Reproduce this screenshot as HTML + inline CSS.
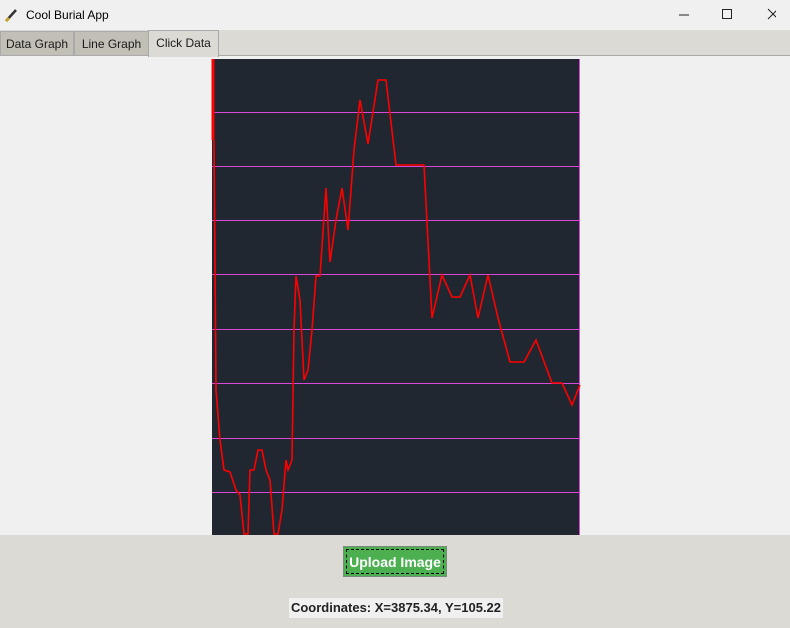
<!DOCTYPE html>
<html><head><style>
body{margin:0;width:790px;height:628px;overflow:hidden;font-family:"Liberation Sans",sans-serif;background:#f0f0f0;position:relative}
.title{position:absolute;left:0;top:0;width:790px;height:30px;background:#f0f0f0;font-size:12px}
.tabs{position:absolute;top:30px;left:0;width:790px;height:25px;background:#dcdad5;border-bottom:1px solid #a9a9a9}
.tab{position:absolute;top:1px;height:23px;line-height:25px;font-size:12px;background:#c2bfb6;border:1px solid #a9a9a9;text-align:center;color:#1a1a1a}
.bottom{position:absolute;left:0;top:535px;width:790px;height:93px;background:#dcdad5}
</style></head><body>
<div class="title">
<svg style="position:absolute;left:4px;top:8px" width="14" height="14"><path d="M2 13 L12 2" stroke="#333" stroke-width="2.5"/><path d="M2 13 L5 10" stroke="#c9a227" stroke-width="3"/></svg>
<span style="position:absolute;left:26px;top:8px">Cool Burial App</span>
<svg style="position:absolute;left:676px;top:7px" width="100" height="16"><path d="M3 8 H13" stroke="#222"/><path d="M46.5 2.5 h9 v9 h-9z" stroke="#222" fill="none"/><path d="M92 2 L102 12 M102 2 L92 12" stroke="#222"/></svg>
</div>
<div class="tabs">
<div class="tab" style="left:0;width:72px">Data Graph</div>
<div class="tab" style="left:74px;width:73px">Line Graph</div>
<div class="tab" style="left:148px;width:69px;top:0;height:26px;background:#dcdad5;border-bottom:none">Click Data</div>
</div>
<svg style="position:absolute;left:0;top:0" width="790" height="628">
<rect x="212" y="59" width="368" height="476" fill="#212730"/>
<g stroke="#d848d8" stroke-width="1">
<path d="M212 112.5H580M212 166.5H580M212 220.5H580M212 274.5H580M212 329.5H580M212 383.5H580M212 438.5H580M212 492.5H580"/>
<path d="M579.5 59V535"/>
</g>
<path d="M213 59V140" stroke="#f00" stroke-width="3"/>
<polyline fill="none" stroke="#f00" stroke-width="1.6" points="214,140 216,390 220,440 224,470 230,472 236,490 240,495 244,534 248,534 250,470 254,470 258,450 262,450 266,470 270,480 274,534 278,534 282,510 286,460 288,470 292,460 294,330 296,276 300,300 304,380 308,370 312,330 316,276 320,276 326,188 330,262 336,220 342,188 348,230 354,150 360,100 368,144 378,80 386,80 396,165 424,165 432,318 442,275 452,297 460,297 470,275 478,318 488,275 498,318 510,362 524,362 536,340 552,383 562,383 572,405 580,385"/>
</svg>
<div class="bottom">
<div style="position:absolute;left:343px;top:11px;width:104px;height:31px;border:1px solid #7a8a7a;background:#4caf50;box-sizing:border-box">
<div style="position:absolute;left:2px;top:2px;right:2px;bottom:2px;border:1px dashed #000;color:#fff;font-weight:bold;font-size:14px;text-align:center;line-height:24px">Upload Image</div></div>
<div style="position:absolute;left:289px;top:63px;width:214px;height:20px;background:#f0f0f0;font-weight:bold;font-size:13px;color:#222;text-align:center;line-height:20px">Coordinates: X=3875.34, Y=105.22</div>
</div>
</body></html>
